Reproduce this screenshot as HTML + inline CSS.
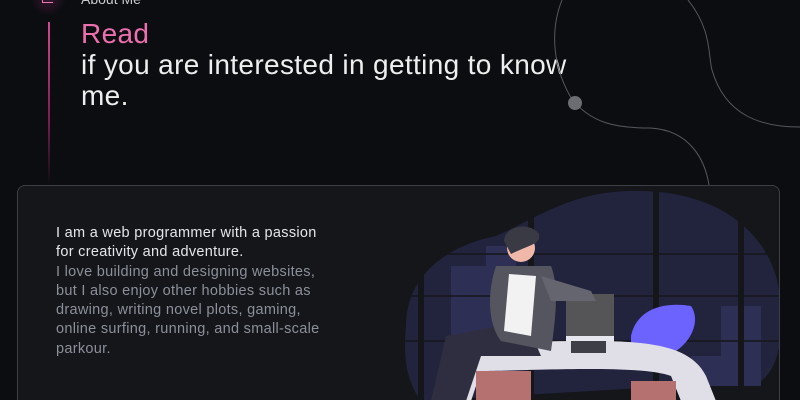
<!DOCTYPE html>
<html><head><style>
html,body{margin:0;padding:0;width:800px;height:400px;overflow:hidden;background:#0b0d11;font-family:"Liberation Sans",sans-serif;}
.abs{position:absolute}
#wrap{position:relative;width:800px;height:400px;overflow:hidden}
</style></head><body><div id="wrap">
<div class="abs" style="left:30px;top:-20px;width:36px;height:36px;border-radius:50%;background:radial-gradient(circle,#3a1630 0%,rgba(11,13,17,0) 70%)"></div>
<div class="abs" style="left:42px;top:-6px;width:10px;height:8px;border-bottom:1.5px solid #e879b0;border-left:1.5px solid #e879b0"></div>
<div class="abs" style="left:81px;top:-9px;color:#c8c8cc;font-size:14px">About Me</div>
<div class="abs" style="left:48px;top:22px;width:2px;height:163px;background:linear-gradient(#d24a90,#7a1f52 60%,#0b0d11)"></div>
<div class="abs" style="left:81px;top:18px;font-size:28px;line-height:31px;color:#eeeeee;letter-spacing:0.35px;width:540px">
<span style="color:#ee6fae">Read</span><br>if you are interested in getting to know<br>me.</div>
<svg class="abs" style="left:0;top:0" width="800" height="400">
<path d="M562,0 C552,25 550,60 570,96 C590,125 620,128 650,128 C690,130 705,160 709,185" fill="none" stroke="#55585e" stroke-width="1"/>
<path d="M688,0 C712,30 708,55 712,70 C725,115 760,127 800,127" fill="none" stroke="#55585e" stroke-width="1"/>
<circle cx="575" cy="103" r="7" fill="#6b6d72"/>
</svg>
<div class="abs" style="left:17px;top:185px;width:761px;height:214px;border:1px solid #3c3f45;border-bottom:none;border-radius:8px 8px 0 0;background:#14161a;overflow:hidden">
<svg class="abs" style="left:373px;top:0" width="390" height="215">
<path d="M15,140 C15,90 55,60 105,50 C150,30 180,6 240,5 C320,3 370,40 385,90 C395,130 392,180 370,195 L30,215 C15,195 12,170 15,140Z" fill="#22233d"/>
<g fill="#2e2f55"><rect x="60" y="80" width="40" height="110"/><rect x="95" y="60" width="30" height="130"/><rect x="330" y="120" width="40" height="80"/><rect x="300" y="170" width="40" height="30"/></g>
<g stroke="#14161a" stroke-width="6"><line x1="30" y1="0" x2="30" y2="215"/><line x1="265" y1="0" x2="265" y2="215"/><line x1="350" y1="0" x2="350" y2="215"/><line x1="140" y1="0" x2="140" y2="215"/></g>
<g stroke="#14161a" stroke-width="1.5"><line x1="0" y1="68" x2="390" y2="68"/><line x1="0" y1="110" x2="390" y2="110"/><line x1="0" y1="155" x2="390" y2="155"/></g>
<path d="M240,150 C245,125 270,115 300,120 C310,135 300,155 285,165 L240,165Z" fill="#6c63ff"/>
<rect x="175" y="108" width="48" height="45" fill="#555558"/><rect x="175" y="150" width="48" height="8" fill="#e6e6ee"/>
<path d="M60,175 C60,160 90,155 200,155 C260,155 300,160 315,190 L325,215 L290,215 L280,190 C250,178 130,185 90,185 L80,215 L55,215Z" fill="#e0dee6"/>
<rect x="85" y="185" width="55" height="30" fill="#b57070"/><rect x="240" y="195" width="45" height="20" fill="#b57070"/>
<path d="M135,135 L55,150 L40,215 L75,215 L90,170 L150,170Z" fill="#2f2e41"/>
<path d="M105,80 C95,110 98,140 110,155 L160,165 C165,130 168,100 160,80Z" fill="#555560"/>
<path d="M118,88 L145,90 L140,150 L113,145Z" fill="#f2f2f2"/>
<path d="M150,90 L200,105 L205,115 L160,115Z" fill="#65656f"/>
<circle cx="130" cy="62" r="14" fill="#f0b8a8"/><path d="M113,55 C114,40 138,35 148,48 C150,58 140,58 120,68Z" fill="#3a3a44"/>
<rect x="180" y="155" width="35" height="12" fill="#3f3f48"/>
</svg>
</div>
<div class="abs" style="left:56px;top:224px;width:266px;font-size:14.5px;line-height:19.3px;letter-spacing:0.3px;color:#e6e6e8">I am a web programmer with a passion for creativity and adventure.<br><span style="color:#8b909a">I love building and designing websites, but I also enjoy other hobbies such as drawing, writing novel plots, gaming, online surfing, running, and small-scale parkour.</span></div>
</div></body></html>
